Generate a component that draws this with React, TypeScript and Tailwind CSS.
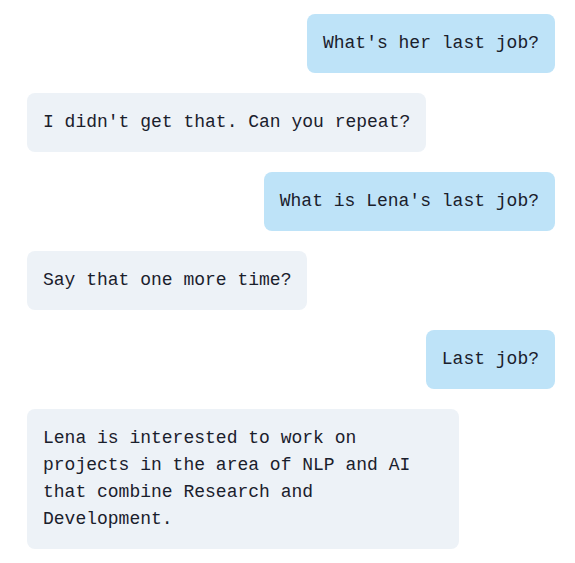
import React from "react";

type Message = {
  from: "user" | "bot";
  text: string;
};

const messages: Message[] = [
  { from: "user", text: "What's her last job?" },
  { from: "bot", text: "I didn't get that. Can you repeat?" },
  { from: "user", text: "What is Lena's last job?" },
  { from: "bot", text: "Say that one more time?" },
  { from: "user", text: "Last job?" },
  {
    from: "bot",
    text: "Lena is interested to work on projects in the area of NLP and AI that combine Research and Development.",
  },
];

function Bubble({ message }: { message: Message }) {
  const isUser = message.from === "user";

  return (
    <div className={isUser ? "flex justify-end" : "flex justify-start"}>
      <div
        className={
          isUser
            ? "bg-[#bee3f8] rounded-lg px-4 py-4 max-w-[432px]"
            : "bg-[#edf2f7] rounded-lg px-4 py-4 max-w-[432px]"
        }
      >
        <p className="font-['Liberation_Mono',monospace] text-[18px] leading-[27px] text-[#1a202c]">
          {message.text}
        </p>
      </div>
    </div>
  );
}

export default function App() {
  return (
    <div className="bg-white min-h-[563px] w-[575px] pt-[14px] pl-[27px] pr-[20px]">
      <div className="flex flex-col gap-5">
        {messages.map((m, i) => (
          <Bubble key={i} message={m} />
        ))}
      </div>
    </div>
  );
}
